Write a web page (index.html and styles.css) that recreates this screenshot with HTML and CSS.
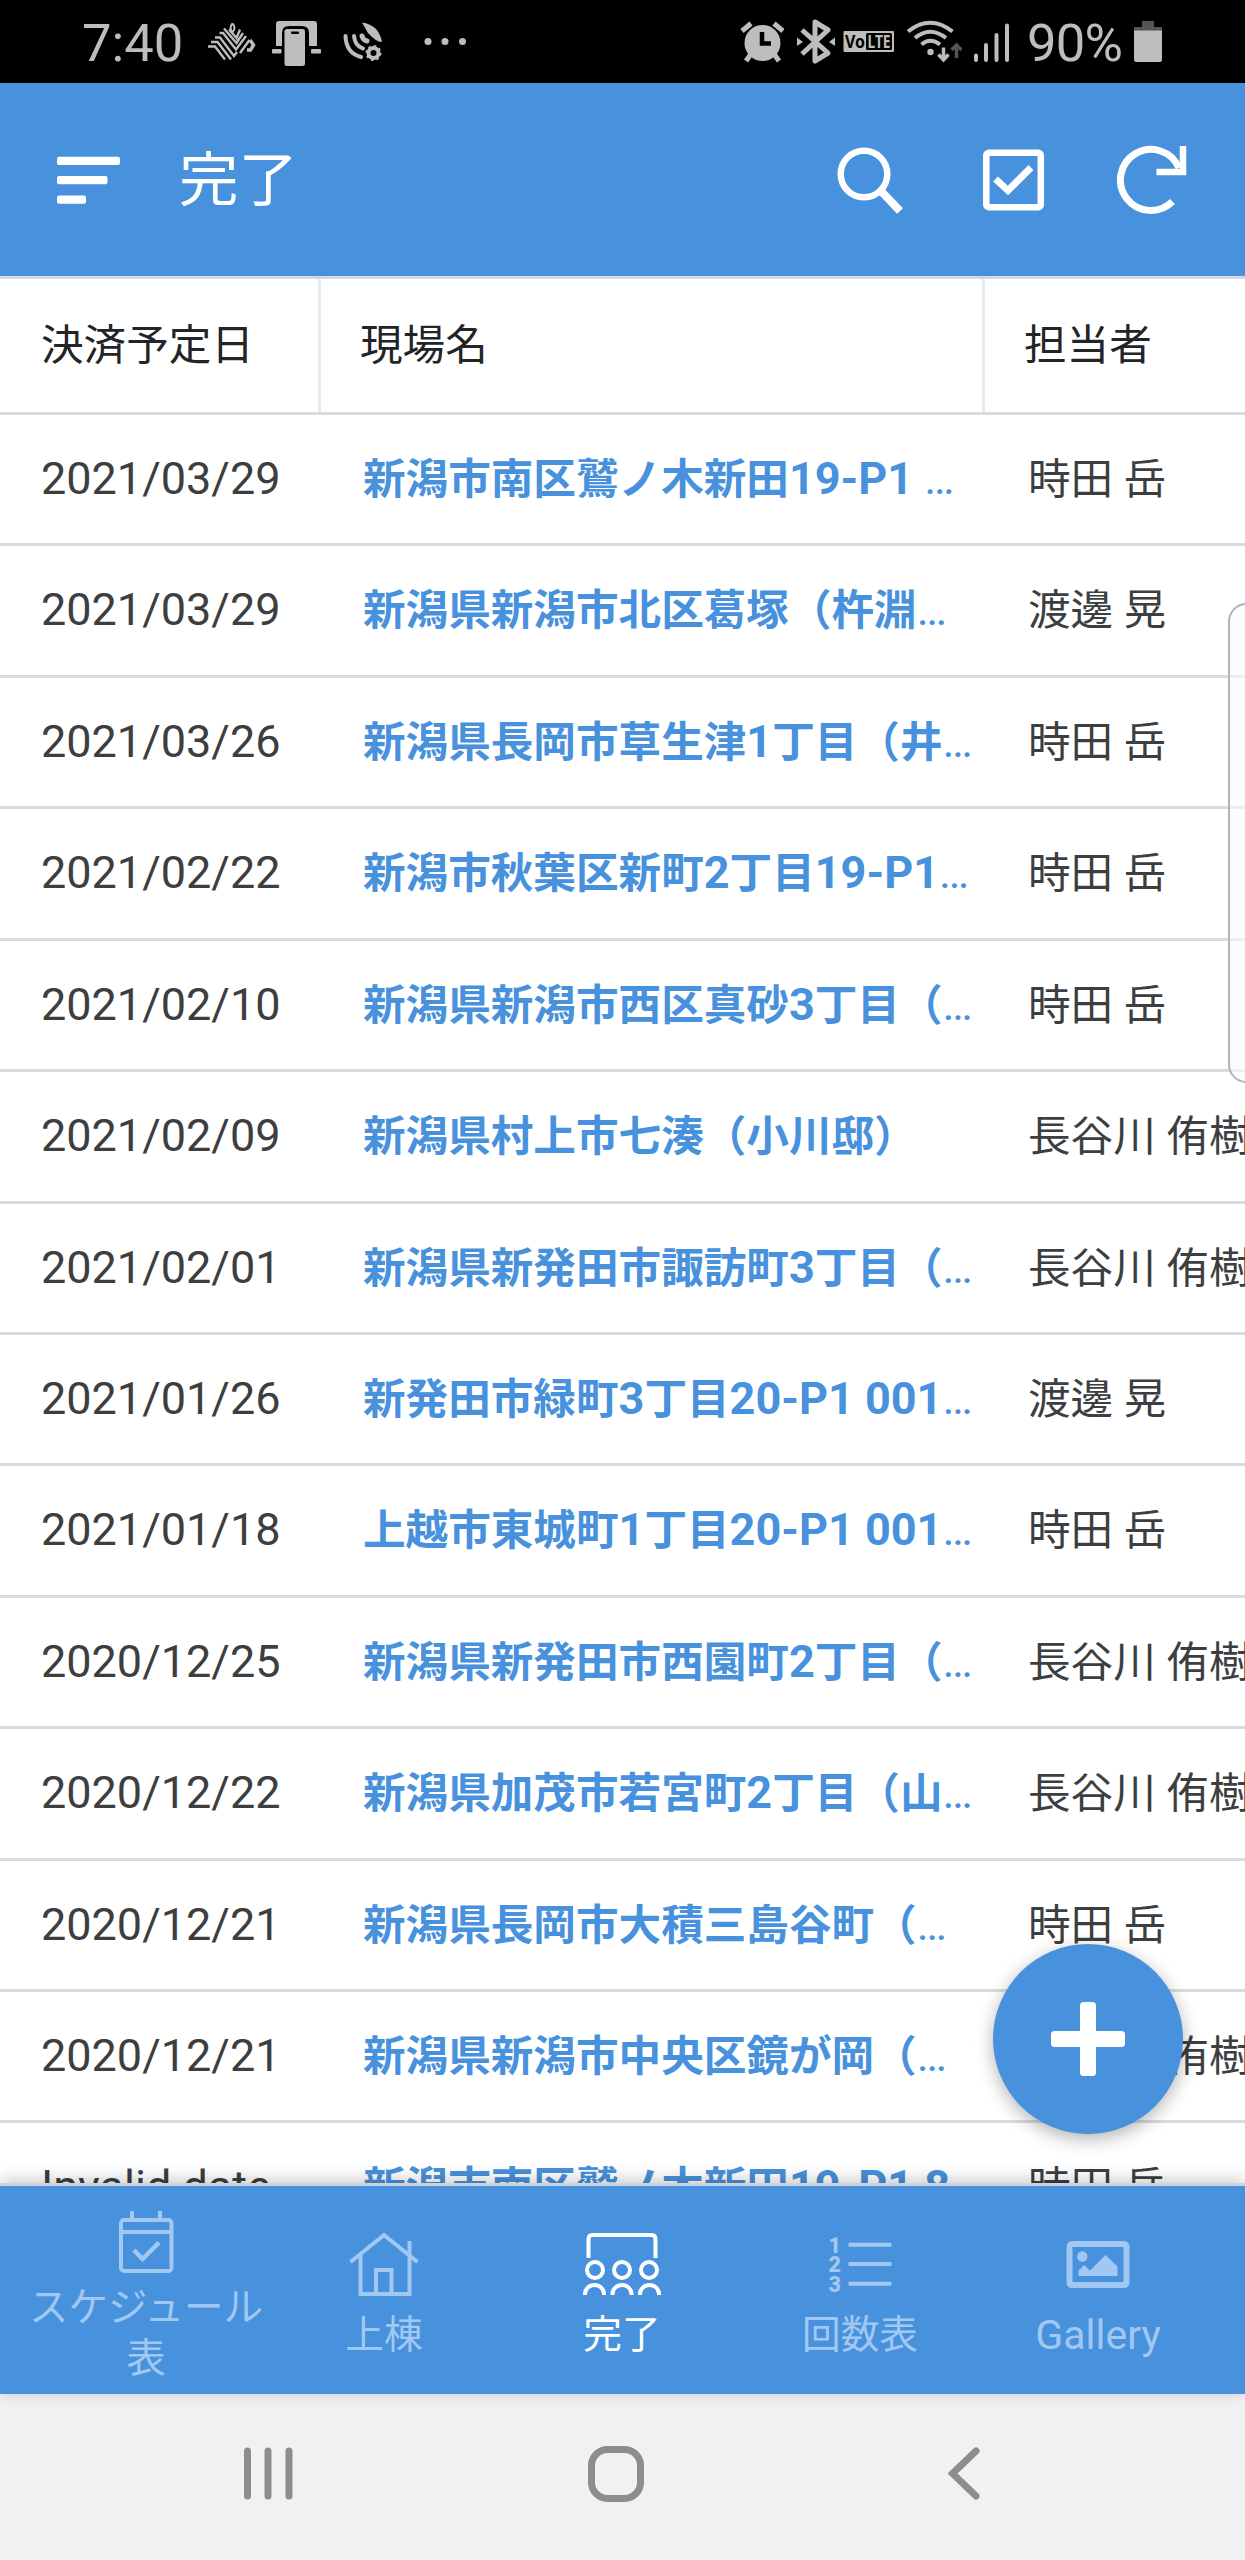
FILE: index.html
```html
<!DOCTYPE html>
<html lang="ja">
<head>
  <meta charset="UTF-8">
  <meta name="viewport" content="width=device-width, initial-scale=1.0">
  <title>完了</title>
  <link rel="stylesheet" href="styles.css">
</head>
<body>
  <!-- Phone status bar -->
  <div class="status">
    <div class="status-left">
      <span class="clock">7:40</span>
      <svg class="zebra" width="50" height="83" viewBox="207 0 50 83" fill="none" stroke="#bdbdbd" stroke-width="2.400">
        <path d="M208 46.500 H215 L225 59.500 M211 42 H217.500 L231 59.500 M215 37.500 H220 L234 56 L237 52 M219.500 33 H223 L236 49.500 L246 36 M224 28.500 L236.500 43 L243 33 M229 29.500 L236.500 38 L240 29.500 M240 53 L249.500 40"/>
        <path d="M232.500 23.500 Q228.500 28 232.500 32 Q236.500 28 232.500 23.500" stroke-width="2"/>
        <path d="M247 50 H250.500 L253.500 45 L250 40" stroke-width="3.500"/>
      </svg>
      <svg class="desk" width="50" height="83" viewBox="272 0 50 83" fill="#bdbdbd">
        <path d="M276 46 V24 Q276 21 279 21 H314 Q317 21 317 24 V46 H309 V33 Q309 26 302 26 H289 Q282 26 282 33 V46 Z"/>
        <rect x="272" y="49" width="9.500" height="4.500" rx="1"/>
        <rect x="311" y="49" width="10" height="4.500" rx="1"/>
        <rect x="284.500" y="29" width="20.500" height="37" rx="2.500"/>
        <rect x="291" y="31.500" width="8" height="2.500" rx="1" fill="#000"/>
      </svg>
      <svg class="dish" width="42" height="83" viewBox="342 0 42 83" fill="none" stroke="#bdbdbd" stroke-width="4" stroke-linecap="round">
        <path d="M362 22.500 Q379 25 382 42 Q376 42 368 33 Z" fill="#bdbdbd" stroke="none"/>
        <path d="M345.500 36 Q346 53 361 57 M354 36 Q355 46 363 48.500"/>
        <path d="M362 36 Q363 40 367 41" stroke-width="5"/>
        <circle cx="373.500" cy="53" r="5" stroke-width="4"/>
        <circle cx="373.500" cy="53" r="7" stroke-width="2" stroke-dasharray="2.500 3" stroke-linecap="butt"/>
      </svg>
      <svg class="dots" width="44" height="83" viewBox="424 0 44 83" fill="#bdbdbd">
        <circle cx="428" cy="41.500" r="3.500"/><circle cx="445" cy="41.500" r="3.500"/><circle cx="462.500" cy="41.500" r="3.500"/>
      </svg>
    </div>
    <div class="status-right">
      <svg width="44" height="83" viewBox="740 0 44 83" fill="none" stroke="#bdbdbd">
        <circle cx="762.500" cy="43" r="18" fill="#bdbdbd" stroke="none"/>
        <path d="M742 31 L751 23.500 M774 23.500 L783 31" stroke-width="5"/>
        <path d="M751 54 L746 61 M774 54 L779 61" stroke-width="5"/>
        <path d="M762 32 V43.500 H771" stroke="#000" stroke-width="4.500"/>
      </svg>
      <svg class="bt" width="40" height="83" viewBox="796 0 40 83" fill="none" stroke="#bdbdbd">
        <path d="M802 30 L828 53 L815 61 V22 L828 30 L802 54" stroke-width="5" stroke-linejoin="round"/>
        <path d="M797 37.500 L803 42 L797 46 Z M835 37.500 L829 42 L835 46 Z" fill="#bdbdbd" stroke="none"/>
      </svg>
      <svg class="volte" width="51" height="83" viewBox="843 0 51 83">
        <rect x="843.500" y="31" width="50.500" height="21" rx="1" fill="#bdbdbd"/>
        <rect x="866" y="33" width="26" height="17" rx="1.500" fill="#000"/>
        <text x="845" y="48" textLength="20" lengthAdjust="spacingAndGlyphs" fill="#000">Vo</text>
        <text x="867.500" y="48" textLength="23" lengthAdjust="spacingAndGlyphs" fill="#bdbdbd">LTE</text>
      </svg>
      <svg class="wifi" width="56" height="83" viewBox="906 0 56 83" fill="none" stroke="#bdbdbd" stroke-width="4">
        <path d="M908 31.500 Q930 14 952.500 31.500 M915 38 Q930 25.500 946 38 M921.500 44.500 Q930 37 940 44.500"/>
        <circle cx="930.500" cy="52" r="3.200" fill="#bdbdbd" stroke="none"/>
        <path d="M943.500 47.500 V59 M938.500 54.500 L943.500 60 L948.500 54.500" stroke-width="3.500"/>
        <path d="M956.500 58 V46 M951.500 50 L956.500 45 L961.500 50" stroke="#555" stroke-width="3.500"/>
      </svg>
      <svg class="signal" width="36" height="83" viewBox="974 0 36 83" stroke="#bdbdbd" stroke-width="4" stroke-linecap="round">
        <path d="M976 55.500 V60 M986 45 V60 M996.500 35 V60 M1007 25.500 V60"/>
      </svg>
      <span class="percent">90%</span>
      <svg class="battery" width="28" height="83" viewBox="1134 0 28 83">
        <path d="M1134 31 V27 H1142 V21 H1154 V27 H1162 V31 Z" fill="#555"/>
        <path d="M1134 30.500 H1162 V59.500 Q1162 62 1159.500 62 H1136.500 Q1134 62 1134 59.500 Z" fill="#bdbdbd"/>
      </svg>
    </div>
  </div>

  <!-- App bar -->
  <header class="appbar">
    <svg width="64" height="50" viewBox="0 0 64 50" fill="#fff">
      <rect y="1.700" width="63" height="8.300" rx="2"/>
      <rect y="21" width="50.500" height="8.300" rx="2"/>
      <rect y="40.500" width="29" height="8.300" rx="2"/>
    </svg>
    <h1>完了</h1>
    <div class="actions">
      <svg width="66" height="70" viewBox="837 145 66 70" fill="none" stroke="#fff" stroke-width="6.500">
        <circle cx="864" cy="174" r="23.300"/>
        <path d="M880 190 L900 211" stroke-width="8"/>
      </svg>
      <svg class="check" width="62" height="70" viewBox="983 145 62 70" fill="none" stroke="#fff" stroke-width="6.500">
        <rect x="986.300" y="152.700" width="54.500" height="54.500" rx="2.500"/>
        <path d="M995.500 179 L1008 190.500 L1031 167.500" stroke-width="7"/>
      </svg>
      <svg class="refresh" width="70" height="70" viewBox="1117 145 70 70" fill="none" stroke="#fff" stroke-width="7">
        <path d="M1172.500 201.500 A30.500 30.500 0 1 1 1179 168"/>
        <path d="M1183 146 V172 H1156.500" stroke-width="6.500"/>
      </svg>
    </div>
  </header>

  <!-- Sites table -->
  <main class="table">
    <div class="thead">
      <div class="date">決済予定日</div>
      <div class="name">現場名</div>
      <div class="staff">担当者</div>
    </div>
    <div class="row"><div class="date">2021/03/29</div><div class="name">新潟市南区鷲ノ木新田<b>19-P1 </b><i>…</i></div><div class="staff">時田 岳</div></div>
    <div class="row"><div class="date">2021/03/29</div><div class="name">新潟県新潟市北区葛塚（杵淵<i>…</i></div><div class="staff">渡邊 晃</div></div>
    <div class="row"><div class="date">2021/03/26</div><div class="name">新潟県長岡市草生津<b>1</b>丁目（井<i>…</i></div><div class="staff">時田 岳</div></div>
    <div class="row"><div class="date">2021/02/22</div><div class="name">新潟市秋葉区新町<b>2</b>丁目<b>19-P1</b><i>…</i></div><div class="staff">時田 岳</div></div>
    <div class="row"><div class="date">2021/02/10</div><div class="name">新潟県新潟市西区真砂<b>3</b>丁目（<i>…</i></div><div class="staff">時田 岳</div></div>
    <div class="row"><div class="date">2021/02/09</div><div class="name">新潟県村上市七湊（小川邸）</div><div class="staff">長谷川 侑樹</div></div>
    <div class="row"><div class="date">2021/02/01</div><div class="name">新潟県新発田市諏訪町<b>3</b>丁目（<i>…</i></div><div class="staff">長谷川 侑樹</div></div>
    <div class="row"><div class="date">2021/01/26</div><div class="name">新発田市緑町<b>3</b>丁目<b>20-P1 001</b><i>…</i></div><div class="staff">渡邊 晃</div></div>
    <div class="row"><div class="date">2021/01/18</div><div class="name">上越市東城町<b>1</b>丁目<b>20-P1 001</b><i>…</i></div><div class="staff">時田 岳</div></div>
    <div class="row"><div class="date">2020/12/25</div><div class="name">新潟県新発田市西園町<b>2</b>丁目（<i>…</i></div><div class="staff">長谷川 侑樹</div></div>
    <div class="row"><div class="date">2020/12/22</div><div class="name">新潟県加茂市若宮町<b>2</b>丁目（山<i>…</i></div><div class="staff">長谷川 侑樹</div></div>
    <div class="row"><div class="date">2020/12/21</div><div class="name">新潟県長岡市大積三島谷町（<i>…</i></div><div class="staff">時田 岳</div></div>
    <div class="row"><div class="date">2020/12/21</div><div class="name">新潟県新潟市中央区鏡が岡（<i>…</i></div><div class="staff">長谷川 侑樹</div></div>
    <div class="row"><div class="date">Invalid date</div><div class="name">新潟市南区鷲ノ木新田<b>19-P1 8</b></div><div class="staff">時田 岳</div></div>
  </main>

  <div class="edge-panel"></div>
  <div class="fab">
    <svg width="74" height="74" viewBox="0 0 74 74" fill="#fff">
      <rect x="29" y="0" width="16" height="74" rx="3.500"/>
      <rect x="0" y="29" width="74" height="16" rx="3.500"/>
    </svg>
  </div>

  <!-- Bottom tabs -->
  <nav class="tabs">
    <div class="tab two-line">
      <svg width="84" height="84" viewBox="104.500 2198 84 84">
        <rect x="121.500" y="2220" width="50.500" height="51" rx="3"/>
        <path d="M121 2232 H172 M132.500 2211 V2220 M160.500 2211 V2220"/>
        <path d="M134.500 2250 L143 2259 L159.500 2242.500" stroke-width="4.500"/>
      </svg>
      <span>スケジュール表</span>
    </div>
    <div class="tab">
      <svg width="84" height="84" viewBox="342.500 2225 84 84">
        <path d="M351 2262 L384.500 2235 L418 2262 M361 2255 V2294 H410 V2241 M376.500 2294 V2270 H392 V2294"/>
      </svg>
      <span>上棟</span>
    </div>
    <div class="tab active">
      <svg width="84" height="84" viewBox="580.500 2225 84 84">
        <path d="M589 2258 V2239 Q589 2235 593 2235 H652 Q656 2235 656 2239 V2258"/>
        <circle cx="595.500" cy="2270" r="8"/><circle cx="622.500" cy="2270" r="8"/><circle cx="649.500" cy="2270" r="8"/>
        <path d="M585.500 2295 V2294 A9.500 9 0 0 1 604.500 2294 V2295 M613 2295 V2294 A9.500 9 0 0 1 632 2294 V2295 M640.500 2295 V2294 A9.500 9 0 0 1 659.500 2294 V2295"/>
      </svg>
      <span>完了</span>
    </div>
    <div class="tab">
      <svg width="84" height="84" viewBox="818.500 2225 84 84">
        <path d="M849 2244.700 H892 M849 2264 H892 M849 2283.800 H892"/>
        <text x="829" y="2252.500">1</text>
        <text x="829" y="2272">2</text>
        <text x="829" y="2291.500">3</text>
      </svg>
      <span>回数表</span>
    </div>
    <div class="tab">
      <svg width="84" height="84" viewBox="1056.500 2225 84 84">
        <rect x="1070" y="2244" width="57" height="41" rx="2.500" stroke-width="6"/>
        <circle cx="1082.800" cy="2256.500" r="5.200" class="solid"/>
        <path class="solid" d="M1079 2276 V2270.500 L1084.500 2265 L1090.500 2270.500 L1106 2255 L1118 2266.500 V2276 Z"/>
      </svg>
      <span class="latin">Gallery</span>
    </div>
  </nav>

  <!-- Android navigation -->
  <div class="softkeys">
    <svg width="50" height="56" viewBox="0 0 50 56"><path d="M4.500 5 V50 M25 5 V50 M46 5 V50" stroke-linecap="round"/></svg>
    <svg class="home" width="56" height="56" viewBox="0 0 56 56"><rect x="3.500" y="3.500" width="49" height="49" rx="16"/></svg>
    <svg width="32" height="56" viewBox="0 0 32 56"><path d="M28 5 L4.500 27.500 L28 50" stroke-linecap="round"/></svg>
  </div>
</body>
</html>
```
FILE: styles.css
```css
* { margin: 0; padding: 0; box-sizing: border-box; }
body {
  width: 1245px;
  height: 2560px;
  display: flex;
  flex-direction: column;
  position: relative;
  overflow: hidden;
  background: #fff;
  font-family: Roboto, "Noto Sans CJK JP", sans-serif;
  color: #3c3e40;
}
svg { display: block; flex: none; }

/* Status bar */
.status {
  height: 83px;
  flex: none;
  display: flex;
  justify-content: space-between;
  padding: 0 83px 0 82px;
  background: #000;
  color: #bdbdbd;
  font-size: 52.5px;
}
.status-left, .status-right { display: flex; align-items: center; }
.clock { width: 125px; padding-top: 3px; }
.desk { margin-left: 15px; }
.dish { margin-left: 20px; }
.dots { margin-left: 40px; }
.bt { margin-left: 12px; }
.volte { margin-left: 7px; font-size: 18px; font-weight: 700; font-family: "Noto Sans", sans-serif; }
.wifi { margin-left: 12px; }
.signal { margin-left: 12px; }
.percent { width: 107px; margin-left: 17px; padding-top: 3px; letter-spacing: -0.7px; }

/* App bar */
.appbar {
  height: 196px;
  flex: none;
  display: flex;
  align-items: center;
  padding: 0 58px 0 57px;
  background: #4891dc;
  border-bottom: 3px solid #d5d9e6;
  color: #fff;
}
.appbar h1 { margin: 3px 0 0 58px; font-size: 59.5px; font-weight: 400; line-height: 80px; }
.actions { display: flex; margin-left: auto; }
.check { margin-left: 80px; }
.refresh { margin-left: 72px; }

/* Table */
.table { flex: 1; min-height: 0; overflow: hidden; }
.thead, .row { display: flex; width: 1400px; white-space: nowrap; border-bottom: 3px solid #dadbdf; }
.thead { height: 136px; font-size: 42.6px; line-height: 132px; color: #222426; }
.thead .date, .thead .name { border-right: 3px solid #e9e9ec; }
.thead .name { padding-left: 39px; }
.thead .staff { padding-left: 39px; }
.row { height: 131.43px; font-size: 42.6px; line-height: 128px; }
.date { width: 321px; flex: none; padding-left: 41px; }
.row .date { font-size: 45px; }
.name { width: 664px; flex: none; padding-left: 42px; overflow: hidden; }
.row .name { color: #4891dc; font-weight: 700; }
.name b { font-size: 45px; font-weight: 700; line-height: 1; }
.name i { font-size: 45px; line-height: 1; font-style: normal; font-weight: 400; font-family: Roboto, sans-serif; }
.staff { padding-left: 43px; }

/* Floating things */
.edge-panel {
  position: absolute;
  top: 603px;
  right: -20px;
  width: 37px;
  height: 480px;
  border: 2px solid #b4b4b6;
  border-radius: 20px;
  background: rgba(250, 250, 250, 0.6);
}
.fab {
  position: absolute;
  top: 1944px;
  left: 993px;
  width: 190px;
  height: 190px;
  display: flex;
  align-items: center;
  justify-content: center;
  border-radius: 50%;
  background: #4891dc;
  box-shadow: 0 5px 18px rgba(0, 0, 0, 0.3);
}

/* Tabs */
.tabs {
  height: 211px;
  flex: none;
  display: flex;
  padding: 0 28px 0 27px;
  position: relative;
  border-top: 3px solid #cdd3df;
  background: #4891dc;
  box-shadow: 0 -3px 16px rgba(0, 0, 0, 0.22);
}
.tab {
  flex: 1;
  display: flex;
  flex-direction: column;
  align-items: center;
  padding-top: 39px;
  color: #a0c8f2;
  font-size: 38.7px;
  line-height: 52px;
  text-align: center;
}
.tab.two-line { padding-top: 12px; font-size: 39.5px; line-height: 51px; }
.tab.active { color: #fff; }
.tab svg { fill: none; stroke: currentColor; stroke-width: 4; }
.tab svg .solid { fill: currentColor; stroke: none; }
.tab svg text { fill: currentColor; stroke: none; font: 900 21.5px Roboto, sans-serif; }
.tab .latin { font-size: 41px; }

/* Soft keys */
.softkeys {
  height: 166px;
  flex: none;
  display: flex;
  justify-content: space-between;
  padding: 52px 265px 0 243px;
  background: #f1f1f1;
}
.softkeys svg { fill: none; stroke: #8d8d8d; stroke-width: 7; }
.softkeys .home { margin-right: 10px; }
```
